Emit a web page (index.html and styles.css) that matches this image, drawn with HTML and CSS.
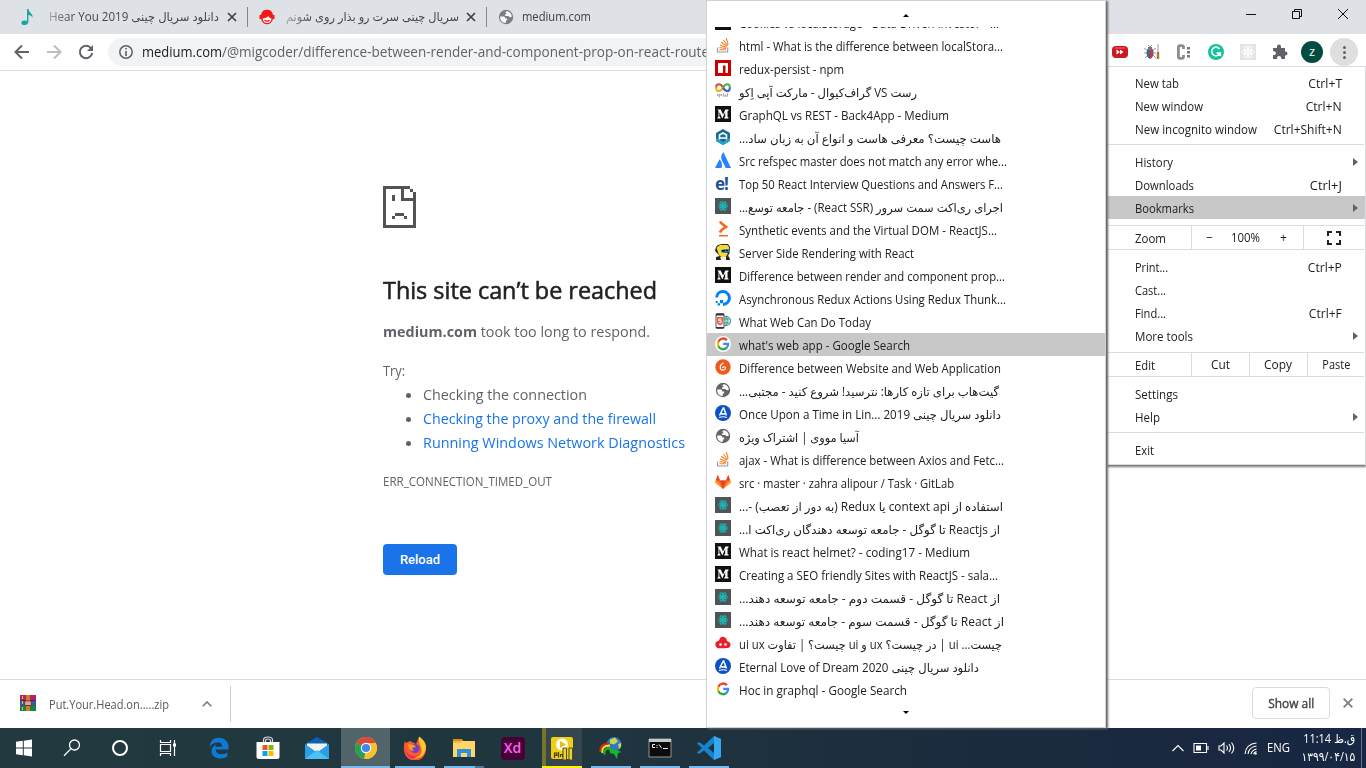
FILE: index.html
```html
<!DOCTYPE html>
<html lang="en">
<head>
<meta charset="utf-8">
<title>medium.com</title>
<link rel="stylesheet" href="styles.css">
</head>
<body>
<svg class="defs" aria-hidden="true">
  <symbol id="medium" viewBox="0 0 16 16"><path fill="#111" d="M0 0h16v16H0z"/><path fill="#fff" d="M2.500 3.500h3.200l2.400 5 2.200-5h3.200v1l-1 .7v5.700l1 .7v.9H9.200v-.9l1-.7V6l-2.600 6h-.5L4.400 6v4.600l1.200 1.300v.6H2.400v-.6l1.100-1.300V5.100z"/></symbol>
  <symbol id="stack" viewBox="0 0 16 16"><path fill="none" stroke="#999" stroke-width="1.100" d="M2.500 10.500v4.500h10.200v-4.500"/><path fill="none" stroke="#f48024" stroke-width="1.100" d="M4.300 12.800h6.600M4.300 10.500l6.700 1M4.900 8l6.500 2.400M6.200 5.300l5.700 4M8.300 3l4.300 5.500M11.200 1l2 6.600"/></symbol>
  <symbol id="npm" viewBox="0 0 16 16"><path fill="#cb0000" d="M0 0h16v16H0z"/><path fill="#fff" d="M3 3h10v10h-2.500V5.500H8V13H3z"/></symbol>
  <symbol id="infinity" viewBox="0 0 16 16"><g fill="none" stroke-width="2.100"><path stroke="#e64a2e" d="M8 4.500C6 .5.900-.2 1.200 4.700"/><path stroke="#efb61c" d="M1.200 4.500C1 9.500 6 9 8 4.500"/><path stroke="#45b549" d="M8 4.500C10 .5 15.100-.2 14.800 4.700"/><path stroke="#465ac2" d="M14.800 4.500C15 9.500 10 9 8 4.500"/></g><path stroke="#aaa" d="M2.500 11v2.300M4.500 11v3.500M6.500 11v2M8.300 10v3.500M10.300 11v2.300M12.500 10v3.300M2.500 12h4M8.300 13h4.500"/></symbol>
  <symbol id="hex" viewBox="0 0 16 16"><path fill="#176c94" d="M8 0l7 4v8l-7 4-7-4V4z"/><path fill="#29a3c3" d="M1 9l7 4 7-4v3l-7 4-7-4z"/><path fill="none" stroke="#fff" stroke-width="1.600" d="M4.500 10.500V6L8 4l3.500 2v4.500M5 9h6"/></symbol>
  <symbol id="atlassian" viewBox="0 0 16 16"><path fill="#2684ff" d="M8.300 0c-3 4-2.600 7 .3 11.500l2 4.500H16zM4.600 7.200L0 16h6.500c1.200-3 .2-6.700-1.900-8.800z"/></symbol>
  <symbol id="react" viewBox="0 0 16 16"><path fill="#4f5556" d="M0 0h16v16H0z"/><g fill="none" stroke="#1cb8b8" stroke-width="1"><ellipse cx="8" cy="8" rx="4.600" ry="1.900"/><ellipse cx="8" cy="8" rx="4.600" ry="1.900" transform="rotate(60 8 8)"/><ellipse cx="8" cy="8" rx="4.600" ry="1.900" transform="rotate(120 8 8)"/></g><circle cx="8" cy="8" r="1.500" fill="#1cb8b8"/></symbol>
  <symbol id="prompt" viewBox="0 0 16 16"><path fill="none" stroke="#f36c21" stroke-width="2.700" d="M5 .5c1.500 3 4 3.800 6 5.300C8.500 7.500 6 8.700 4.800 11.500"/><path fill="#f36c21" d="M4 14h9v1.500H4z"/></symbol>
  <symbol id="hero" viewBox="0 0 16 16"><path fill="#222" d="M3 1l4-1h6l2 3-.5 6-2 4h-7L2 9 0 7l1-4z"/><path fill="#f6d931" d="M1.500 3.500L5 1h7.500L14 3v2L7 6 6 8l7 1-2 4-4 .5L4 11 2.500 7z"/><path fill="#257fbd" d="M6 6l8-1v3l-4 1-4-1z"/><path fill="#111" d="M7 6h3v1.500H7zM11 6h2v1h-2z"/><path fill="#222" d="M1 13l4-1 1 4H1zM11 12.500h3l1 3.500h-4z"/><path fill="#eee" d="M6 14h4.500v2H6z"/></symbol>
  <symbol id="ocean" viewBox="0 0 16 16"><path fill="none" stroke="#0080ff" stroke-width="3" d="M1.700 7.500C1.800 3.600 4.600 1.600 8 1.600A6.400 6.400 0 0 1 8 14.400"/><path fill="#0080ff" d="M5 10h3.200v3.200H5zM2.600 13.200H5v2.400H2.600zM.7 11h2v2h-2z"/></symbol>
  <symbol id="webcan" viewBox="0 0 16 16"><circle cx="11" cy="8" r="4.700" fill="#e2f4f2" stroke="#26958b"/><path fill="none" stroke="#26958b" stroke-width=".8" d="M7 6h8M7 10h8M11 3v10M11 3q4 5 0 10"/><rect x="1" y=".5" width="8" height="15" rx="1" fill="#fff" stroke="#555"/><path fill="#333" d="M1 1h8v1.500H1zM1 14h8v1H1z"/><path fill="#e95b3f" d="M1.700 4h6.600l-.6 7L5 12.500 2.300 11z"/><path fill="none" stroke="#fff" d="M6.500 6H3.700v1.700h2.500l-.2 2H3.700"/></symbol>
  <symbol id="google" viewBox="0 0 16 16"><circle cx="8" cy="8" r="8" fill="#fff"/><g fill="none" stroke-width="2.300"><path stroke="#ea4335" d="M11.900 4.200A5.100 5.100 0 0 0 3.400 5.700"/><path stroke="#fbbc05" d="M3.500 5.600a5.100 5.100 0 0 0 0 4.800"/><path stroke="#34a853" d="M3.400 10.200a5.100 5.100 0 0 0 8.200 1.600"/><path stroke="#4285f4" d="M11.500 11.900a5 5 0 0 0 1.600-4H8.200"/></g></symbol>
  <symbol id="orange" viewBox="0 0 16 16"><circle cx="8" cy="8" r="7.700" fill="#f15a1d"/><path fill="none" stroke="#fff" stroke-width="1.200" d="M8.500 4C6 5 5 7 5.300 9.300c.5 2.500 4.900 2.400 5.200 0 .2-2-3-2-2.800-.3"/></symbol>
  <symbol id="globe" viewBox="0 0 16 16"><circle cx="8" cy="8" r="7.200" fill="#646669"/><path fill="#fff" d="M2.200 7.500h3.500c1 0 1.500.7 1.500 2h2v1.500c-1 0-1.500 1-1.500 2.900C4.200 14 1.800 11 2.200 7.500zM7.300 3.500C8 2.200 9 2 10 2.500c2 .7 3.500 2.500 3.900 5-1.400 1-2.900.9-3.400-.4C9 7 7.500 7.300 7 6.500c-.5-.8.5-1.300 1.500-1.300 0-.8-.5-1.200-1.200-1.700z"/></symbol>
  <symbol id="ablue" viewBox="0 0 16 16"><circle cx="8" cy="8" r="8" fill="#0c50c5"/><path fill="none" stroke="#fff" stroke-width="1.500" d="M8.500 2.500L4.500 10.500M8.500 2.500l3 8M6 8.500q2.500 1 5 0"/><path stroke="#fff" stroke-width="1.200" d="M4 12.500q4-1.500 8 0" fill="none"/></symbol>
  <symbol id="gitlab" viewBox="0 0 16 16"><path fill="#fc6d26" d="M0 8.500L2.700 1l2.300 5.500h6L13.300 1 16 8.500 8 15z"/><path fill="#e24329" d="M5 6.500h6L8 15zM2.700 1L5 6.500H1zM13.300 1L11 6.500h4z"/><path fill="#fca326" d="M0 8.500l1-2.600L8 15zM16 8.500l-1-2.600L8 15z"/></symbol>
  <symbol id="redcar" viewBox="0 0 16 16"><path fill="#e9202b" d="M1 7l3-1.500L5 3q3-3 6.500.7L12 6q4 1 3.500 4.500-1 3-3.500 2.500-5 .5-9 .2C0 12 0 8 1 7z"/><circle cx="5.500" cy="9.500" r="1.300" fill="#fff"/><circle cx="10.500" cy="9.500" r="1.300" fill="#fff"/></symbol>
  <symbol id="chev" viewBox="0 0 5 8"><path fill="#5f6368" d="M0 0l5 4-5 4z"/></symbol>
</svg>

<div class="screen">
  <header class="tabstrip">
    <div class="tab tab1"><svg class="ic" viewBox="0 0 16 16"><path fill="#18a3a4" d="M7 0h1.500c.3 4 4.500 4 4 8.500C11.300 6.500 9.500 6 8.400 6v6.700C8 15.500 5 16.500 3 16c-3-1-1.500-4.600 1.500-4.400L7 12z"/></svg><span class="fade"><span class="fit" data-w="170">Hear You 2019 دانلود سریال چینی</span></span><svg class="x" viewBox="0 0 10 10"><path d="M1 1l8 8M9 1L1 9"/></svg></div>
    <div class="tab tab2"><svg class="ic" viewBox="0 0 16 16"><path fill="#f21818" d="M2 6C3 2 5 .8 8 .8S13 2 14 6h1.500v4H14c-1 3.500-3.500 5.200-6 5.200S3 13.500 2 10H.5V6z"/><path fill="#fff" d="M3.500 9.500C6 9.500 8 8.500 9.500 7c.5 1.500 1.500 2.300 3 2.500C12 13 10 14 8 14s-4-1.300-4.500-4.500z"/><path stroke="#f21818" stroke-width="1.200" fill="none" d="M5.500 11q2.500 2.500 5 0"/></svg><span class="fade2"><span class="fit" data-w="173" dir="rtl">سریال چینی سرت رو بذار روی شونم</span></span><svg class="x" viewBox="0 0 10 10"><path d="M1 1l8 8M9 1L1 9"/></svg></div>
    <div class="tab tab3"><svg class="ic" viewBox="0 0 16 16"><use href="#globe"/></svg><span class="fit" data-w="69">medium.com</span></div>
    <div class="winbtns">
      <svg viewBox="0 0 12 12"><path d="M1 6.500h10"/></svg>
      <svg viewBox="0 0 12 12"><path d="M1.500 3.500h7v7h-7zM3.500 3.500v-2h7v7h-2"/></svg>
      <svg viewBox="0 0 12 12"><path d="M1 1l10 10M11 1L1 11"/></svg>
    </div>
  </header>

  <nav class="toolbar">
    <svg class="nav" viewBox="0 0 16 16"><path fill="none" stroke="#5f6368" stroke-width="2" d="M15 8H2M8 1.500L1.500 8 8 14.500"/></svg>
    <svg class="nav" viewBox="0 0 16 16"><path fill="none" stroke="#bcbec0" stroke-width="2" d="M1 8h13M8 1.500L14.500 8 8 14.500"/></svg>
    <svg class="nav" viewBox="0 0 16 16"><path fill="none" stroke="#5f6368" stroke-width="2" d="M13 4.200A6.200 6.200 0 1 0 14.200 9"/><path fill="#5f6368" d="M15 1v6H9z"/></svg>
    <div class="omnibox">
      <svg viewBox="0 0 14 14"><circle cx="7" cy="7" r="6.200" fill="none" stroke="#5f6368" stroke-width="1.500"/><path fill="#5f6368" d="M6.200 3h1.600v1.600H6.200zM6.200 6h1.600v5H6.200z"/></svg>
      <span class="domain"><span class="fit" data-w="80">medium.com</span></span><span class="fit path" data-w="487">/@migcoder/difference-between-render-and-component-prop-on-react-route</span>
    </div>
    <div class="exts">
      <svg viewBox="0 0 16 16"><rect y="2" width="16" height="12" rx="4" fill="#cf1722"/><path fill="#e23f48" d="M3 3h10v2H3z"/><path fill="#fff" d="M4.500 5.500L8 8l-3.500 2.500zM8 5.500L11.500 8 8 10.500z"/></svg>
      <svg viewBox="0 0 16 16"><path stroke="#999" fill="none" d="M0 4l4 3M0 9h4M1 14l3-3M12 4L8 7M12 9H8M12 14l-3-3M4 1l2 2 2-2"/><ellipse cx="6" cy="9" rx="3.500" ry="5.700" fill="#47668b"/><path fill="#c4384e" d="M6 4c4 0 4 9 0 10.700z"/><path fill="#777" d="M4 3h4v3H4z"/><path stroke="#999" d="M14 0v8"/><path stroke="#a9793c" stroke-width="2.500" d="M14 8v7"/></svg>
      <svg viewBox="0 0 16 16"><path fill="none" stroke="#8d8d8d" stroke-width="2.800" d="M7.500 5V3.500Q7.500 1.700 6 1.700H4Q2.400 1.700 2.400 3.500v9q0 1.800 1.600 1.800h2q1.500 0 1.500-1.800V11"/><path fill="#777" d="M11 3h3v2.500h-3zM11 7h3v2.500h-3zM11 11h3v2.500h-3z"/></svg>
      <svg viewBox="0 0 16 16"><circle cx="8" cy="8" r="8" fill="#15c39a"/><path fill="none" stroke="#fff" stroke-width="1.700" d="M11.500 5A4.300 4.300 0 1 0 12 9H8.500M12.300 8.500V12"/></svg>
      <svg viewBox="0 0 16 16"><path fill="#e4e4e4" d="M0 0h16v16H0z"/><g fill="none" stroke="#fff"><ellipse cx="8" cy="8" rx="6" ry="2.500"/><ellipse cx="8" cy="8" rx="6" ry="2.500" transform="rotate(60 8 8)"/><ellipse cx="8" cy="8" rx="6" ry="2.500" transform="rotate(120 8 8)"/></g><circle cx="8" cy="8" r="1.500" fill="#fff"/></svg>
      <svg viewBox="0 0 16 16"><path fill="#5f6368" d="M1 4h4V2.500a2 2 0 0 1 4 0V4h4v3.500h.5a2 2 0 0 1 0 4H13V15H9.200v-1a2 2 0 0 0-4.200 0v1H1v-4h1a1.800 1.800 0 0 0 0-3.700H1z"/></svg>
    </div>
    <div class="avatar">z</div>
    <div class="more"><i></i><i></i><i></i></div>
  </nav>

  <main class="page">
    <svg class="sad" viewBox="0 0 11 14" shape-rendering="crispEdges"><path fill="#535353" d="M0 0h9v1H1v12h9V5H6V1h1v3h3V2h1v12H0zM9 1h1v1H9zM3 3h1v2H3zM4 9h3v1H4zM3 10h1v1H3zM7 10h1v1H7z"/></svg>
    <h1><span class="fit" data-w="274">This site can’t be reached</span></h1>
    <p class="msg"><span class="fit" data-w="267"><b>medium.com</b> took too long to respond.</span></p>
    <p class="try"><span class="fit" data-w="22">Try:</span></p>
    <ul class="tips">
      <li><span class="fit" data-w="164">Checking the connection</span></li>
      <li><a class="fit" data-w="233">Checking the proxy and the firewall</a></li>
      <li><a class="fit" data-w="262">Running Windows Network Diagnostics</a></li>
    </ul>
    <p class="code"><span class="fit" data-w="169">ERR_CONNECTION_TIMED_OUT</span></p>
    <button class="reload">Reload</button>
  </main>

  <footer class="shelf">
    <svg class="rar" viewBox="0 0 16 16"><path fill="#b4235c" d="M0 0h16v5.300H0z"/><path fill="#3b54b0" d="M0 5.300h16v5.300H0z"/><path fill="#168446" d="M0 10.600h16V16H0z"/><path fill="#2a1838" d="M0 5h16v.7H0zM0 10.400h16v.7H0z"/><path fill="#d47a27" d="M6 0h4v16H6z"/><path fill="#fff" stroke="#6d3925" d="M5 6h6v4.500H5z"/><path stroke="#d93b42" d="M7 6v4M9 6v4"/><path stroke="#eec241" d="M2.500 1v3M2.500 6v3M2.500 12v3"/></svg>
    <span class="file"><span class="fit" data-w="120">Put.Your.Head.on.....zip</span></span>
    <svg class="up" viewBox="0 0 10 6"><path d="M.7 5.300L5 1l4.300 4.300"/></svg>
    <span class="vline"></span>
    <button class="showall"><span class="fit" data-w="46">Show all</span></button>
    <svg class="close" viewBox="0 0 10 10"><path d="M.7.7l8.600 8.600M9.300.7L.7 9.300"/></svg>
  </footer>

  <div class="taskbar">
    <div class="t"><svg viewBox="0 0 24 24"><path fill="#fff" d="M4 5.800l6.800-1v6.700H4zM11.800 4.700L20 3.600v7.900h-8.200zM4 12.500h6.800v6.700L4 18.200zM11.800 12.500H20v7.900l-8.200-1.100z"/></svg></div>
    <div class="t"><svg viewBox="0 0 24 24"><g fill="none" stroke="#fff" stroke-width="1.300"><circle cx="14.500" cy="9" r="5"/><path d="M11 12.600l-7 7.200"/></g></svg></div>
    <div class="t"><svg viewBox="0 0 24 24"><circle cx="12" cy="12" r="7" fill="none" stroke="#fff" stroke-width="2"/></svg></div>
    <div class="t"><svg viewBox="0 0 24 24"><path fill="none" stroke="#fff" stroke-width="1.200" d="M4.500 8.500h10v7h-10zM4.500 4v2.500h10V4M4.500 20v-2.500h10V20M18.500 4v16"/><path fill="#fff" d="M17 7.500h3v3h-3z"/></svg></div>
    <div class="t w first"><svg viewBox="0 0 24 24"><path fill="#0c7bd8" d="M2.500 11C3.500 4 7.500 1.800 12 1.800c6 0 9.500 4.500 9.500 8.700v3H8.500c.3 3.500 3 4.700 6 4.700 2.500 0 4.200-.6 5.800-1.600v4C18.500 21.800 16 22.500 13.300 22.500 7.500 22.500 4.500 18.800 4.500 15.500c0-3.500 2-5.800 4.700-7.300-.7 1-1 1.800-1 2.500h7c0-3-1.500-4.300-4.200-4.300-4 0-7 2-8.500 4.600z"/></svg></div>
    <div class="t w"><svg viewBox="0 0 24 24"><path fill="none" stroke="#ddd" stroke-width="1.200" d="M7.500 7V4q0-3 4.500-3t4.500 3v3M9.500 7V5q0-2 2.500-2t2.500 2v2"/><path fill="#fff" d="M.5 6h23v15q0 2-2 2h-19q-2 0-2-2z"/><path fill="#f25022" d="M6.500 9h5v5h-5z"/><path fill="#7fba00" d="M12.500 9h5v5h-5z"/><path fill="#00a4ef" d="M6.500 15h5v5h-5z"/><path fill="#ffb900" d="M12.500 15h5v5h-5z"/></svg></div>
    <div class="t w"><svg viewBox="0 0 24 24"><path fill="#0a63b6" d="M0 8l12-7 12 7v3H0z"/><path fill="#f4f4f4" d="M2 7.500h20V15H2z"/><path fill="#2d9fe4" d="M0 8l12 8.500L24 8v15H0z"/><path fill="#48c3f3" d="M0 23l12-9 12 9z"/></svg></div>
    <div class="t w on active"><svg viewBox="0 0 24 24"><circle cx="12" cy="12" r="11" fill="#fbc12d"/><path fill="#e0473b" d="M12 12L2.500 6.500a11 11 0 0 1 19 0z"/><path fill="#29a153" d="M12 12l-2 11A11 11 0 0 1 2.500 6.500z"/><path fill="#fbc12d" d="M12 7h9.800a11 11 0 0 1-10.300 16L16 14z"/><circle cx="12" cy="12" r="5.200" fill="#fff"/><circle cx="12" cy="12" r="4.100" fill="#4285f4"/></svg></div>
    <div class="t w on"><svg viewBox="0 0 24 24"><path fill="#ff5a2a" d="M2 5l1 2 4-2 6 3 3-7q7 4 7 12a11 11 0 0 1-22 1Q.5 9 2 5z"/><path fill="#ffc62e" d="M16 .5c6 4 8 9 6.500 13.500C21 20 16 23 11 22c7-1 9-6 7-11-.5-2-3-4-2-10.500z"/><path fill="#e62672" d="M2 11c1 8 7 10 12 9-4 5-12 1-12-9z"/><circle cx="12" cy="12.500" r="4.600" fill="#7141c5"/><path fill="#ff9c28" d="M5 8l6 1 2 2-4 1 2 3q-6 0-6-7z"/></svg></div>
    <div class="t w on fold"><svg viewBox="0 0 24 24"><path fill="#d7920b" d="M1 3h9l2 3H1z"/><path fill="#ffd667" d="M1 5h22v16H1z"/><path fill="#f1bb42" d="M1 5h9l-2 2H1z"/><path fill="#2e91dc" d="M5 13h14v8h-4v-4H9v4H5z"/></svg></div>
    <div class="t w"><div class="xd">Xd</div></div>
    <div class="t w on play"><svg viewBox="0 0 24 24"><rect x="1" y="1" width="22" height="22" rx="2" fill="#f1cf17"/><circle cx="12" cy="8.500" r="6" fill="#fff"/><path fill="#e9bd00" d="M10 5l6 3.500-6 3.500z"/><path stroke="#4c4000" stroke-width="1.200" fill="none" d="M4.500 22v-5h2.300v2.300H4.500M8.500 16v5.500M10.500 21v-2.500h2V21"/><path fill="#e7d63b" stroke="#544c09" d="M13 12h3.500v12H13zM19 12h3.500v12H19z"/></svg></div>
    <div class="t w on"><svg viewBox="0 0 24 24"><circle cx="15" cy="8.500" r="7.500" fill="#3474c4"/><path fill="#c8d64b" d="M11 3.500l5-2 3 4-4 3-4-1zM19 8l3-1v4l-2 2z"/><path fill="none" stroke="#d22121" stroke-width="2" d="M1.500 16Q0 8 10 7.500"/><path fill="none" stroke="#f4e21c" stroke-width="2" d="M3.500 17Q2 9.500 11 9.500"/><path fill="none" stroke="#25a52a" stroke-width="2.500" d="M5.500 18.500Q4 12 12 12"/><path fill="#16b72a" d="M10 12l13 4-4 1-1 6-3-5-4-1z"/></svg></div>
    <div class="t w on"><svg viewBox="0 0 24 24"><path fill="#0b0b0b" stroke="#969696" d="M1 3h22v18H1z"/><path fill="#c5c9cb" d="M1 3h22v3H1z"/><path fill="none" stroke="#eee" d="M7 8.500H4.500v3H7M9 9v1M9 11v1M11 8.500l2.500 3.500M15 12.500h5"/></svg></div>
    <div class="t w on"><svg viewBox="0 0 24 24"><path fill="#1684d1" d="M17 0l7 3v18l-7 3L7 14.500 2 18l-2-1.500L5 12 0 7.500 2 6l5 3.500zM17 7l-6 5 6 5z"/><path fill="#35a8ef" d="M17 0l7 3v18l-7 3z"/></svg></div>
    <div class="tray">
      <svg width="12" height="8" viewBox="0 0 12 8"><path d="M.5 7L6 1.500 11.500 7"/></svg>
      <svg width="16" height="10" viewBox="0 0 16 10"><path d="M1 .5h12.500v9H1zM15 3v4"/><path fill="#fff" stroke="none" d="M3 2.500h5v5H3z"/></svg>
      <svg width="17" height="14" viewBox="0 0 17 14"><path d="M1 5h2l3-3v10L3 9H1zM8.500 4.500q2 2.500 0 5M11 3q3 4 0 8M13.500 1.500q4.500 5.500 0 11"/></svg>
      <svg width="14" height="13" viewBox="0 0 14 13"><path d="M1 12Q2 2 12.500 1M4 12Q5 5 12.500 4M7 12q1-4 5.500-5M9.500 12q1-2 3-2.500"/><circle cx="11.500" cy="11.500" r="1.200" fill="#fff" stroke="none"/></svg>
      <span class="eng"><span class="fit" data-w="23">ENG</span></span>
      <div class="clock"><span class="fit end" data-w="52" dir="rtl">ق.ظ 11:14</span><span class="fit end" data-w="54" dir="ltr" lang="fa">۱۳۹۹/۰۴/۱۵</span></div>
    </div>
    <span class="peek"></span>
  </div>
</div>

<aside class="menu">
  <div class="mi"><span class="fit" data-w="44">New tab</span><span class="fit end" data-w="34">Ctrl+T</span></div>
  <div class="mi"><span class="fit" data-w="68">New window</span><span class="fit end" data-w="36">Ctrl+N</span></div>
  <div class="mi"><span class="fit" data-w="122">New incognito window</span><span class="fit end" data-w="68">Ctrl+Shift+N</span></div>
  <hr>
  <div class="mi"><span class="fit" data-w="38">History</span><svg><use href="#chev"/></svg></div>
  <div class="mi"><span class="fit" data-w="59">Downloads</span><span class="fit end" data-w="32">Ctrl+J</span></div>
  <div class="mi sel"><span class="fit" data-w="59">Bookmarks</span><svg><use href="#chev"/></svg></div>
  <div class="cells zoom"><div class="lab"><span class="fit" data-w="31">Zoom</span></div><div class="z"><span>−</span><span class="fit" data-w="29">100%</span><span>+</span></div><div class="fs"><svg viewBox="0 0 14 14"><path fill="none" stroke="#202124" stroke-width="2" d="M1 5V1h4M9 1h4v4M13 9v4H9M5 13H1V9"/></svg></div></div>
  <div class="mi"><span class="fit" data-w="33">Print...</span><span class="fit end" data-w="34">Ctrl+P</span></div>
  <div class="mi"><span class="fit" data-w="31">Cast...</span></div>
  <div class="mi"><span class="fit" data-w="31">Find...</span><span class="fit end" data-w="33">Ctrl+F</span></div>
  <div class="mi"><span class="fit" data-w="58">More tools</span><svg><use href="#chev"/></svg></div>
  <div class="cells edit"><div class="lab"><span class="fit" data-w="20">Edit</span></div><div><span class="fit mid" data-w="19">Cut</span></div><div><span class="fit mid" data-w="28">Copy</span></div><div><span class="fit mid" data-w="28">Paste</span></div></div>
  <div class="mi"><span class="fit" data-w="43">Settings</span></div>
  <div class="mi"><span class="fit" data-w="25">Help</span><svg><use href="#chev"/></svg></div>
  <hr class="last">
  <div class="mi"><span class="fit" data-w="19">Exit</span></div>
</aside>

<aside class="bookmarks">
  <div class="arrow"><i class="aup"></i></div>
  <div class="list">
    <div class="bm"><svg><use href="#medium"/></svg><span class="fit" data-w="260">Cookies vs localStorage - Data Driven Investor - ...</span></div>
    <div class="bm"><svg><use href="#stack"/></svg><span class="fit" data-w="264">html - What is the difference between localStora...</span></div>
    <div class="bm"><svg><use href="#npm"/></svg><span class="fit" data-w="105">redux-persist - npm</span></div>
    <div class="bm"><svg><use href="#infinity"/></svg><span class="fit" dir="rtl" data-w="178">رست VS گراف‌کیوال - مارکت آپی اِکو</span></div>
    <div class="bm"><svg><use href="#medium"/></svg><span class="fit" data-w="210">GraphQL vs REST - Back4App - Medium</span></div>
    <div class="bm"><svg><use href="#hex"/></svg><span class="fit" dir="rtl" data-w="262">هاست چیست؟ معرفی هاست و انواع آن به زبان ساد...</span></div>
    <div class="bm"><svg><use href="#atlassian"/></svg><span class="fit" data-w="268">Src refspec master does not match any error whe...</span></div>
    <div class="bm"><span class="eicon">e!</span><span class="fit" data-w="264">Top 50 React Interview Questions and Answers F...</span></div>
    <div class="bm"><svg><use href="#react"/></svg><span class="fit" dir="rtl" data-w="264">اجرای ری‌اکت سمت سرور (React SSR) - جامعه توسع...</span></div>
    <div class="bm"><svg><use href="#prompt"/></svg><span class="fit" data-w="258">Synthetic events and the Virtual DOM - ReactJS...</span></div>
    <div class="bm"><svg><use href="#hero"/></svg><span class="fit" data-w="175">Server Side Rendering with React</span></div>
    <div class="bm"><svg><use href="#medium"/></svg><span class="fit" data-w="266">Difference between render and component prop...</span></div>
    <div class="bm"><svg><use href="#ocean"/></svg><span class="fit" data-w="267">Asynchronous Redux Actions Using Redux Thunk...</span></div>
    <div class="bm"><svg><use href="#webcan"/></svg><span class="fit" data-w="132">What Web Can Do Today</span></div>
    <div class="bm sel"><svg><use href="#google"/></svg><span class="fit" data-w="171">what's web app - Google Search</span></div>
    <div class="bm"><svg><use href="#orange"/></svg><span class="fit" data-w="262">Difference between Website and Web Application</span></div>
    <div class="bm"><svg><use href="#globe"/></svg><span class="fit" dir="rtl" data-w="260">گیت‌هاب برای تازه کارها: نترسید! شروع کنید - مجتبی...</span></div>
    <div class="bm"><svg><use href="#ablue"/></svg><span class="fit" data-w="262">Once Upon a Time in Lin... 2019 دانلود سریال چینی</span></div>
    <div class="bm"><svg><use href="#globe"/></svg><span class="fit" dir="rtl" data-w="120">آسیا مووی | اشتراک ویژه</span></div>
    <div class="bm"><svg><use href="#stack"/></svg><span class="fit" data-w="265">ajax - What is difference between Axios and Fetc...</span></div>
    <div class="bm"><svg><use href="#gitlab"/></svg><span class="fit" data-w="215">src · master · zahra alipour / Task · GitLab</span></div>
    <div class="bm"><svg><use href="#react"/></svg><span class="fit" dir="rtl" data-w="264">استفاده از context api یا Redux (به دور از تعصب) -...</span></div>
    <div class="bm"><svg><use href="#react"/></svg><span class="fit" dir="rtl" data-w="261">از Reactjs تا گوگل - جامعه توسعه دهندگان ری‌اکت ا...</span></div>
    <div class="bm"><svg><use href="#medium"/></svg><span class="fit" data-w="231">What is react helmet? - coding17 - Medium</span></div>
    <div class="bm"><svg><use href="#medium"/></svg><span class="fit" data-w="259">Creating a SEO friendly Sites with ReactJS - sala...</span></div>
    <div class="bm"><svg><use href="#react"/></svg><span class="fit" dir="rtl" data-w="261">از React تا گوگل - قسمت دوم - جامعه توسعه دهند...</span></div>
    <div class="bm"><svg><use href="#react"/></svg><span class="fit" dir="rtl" data-w="265">از React تا گوگل - قسمت سوم - جامعه توسعه دهند...</span></div>
    <div class="bm"><svg><use href="#redcar"/></svg><span class="fit" dir="rtl" data-w="263">چیست... ui | در چیست؟ ux و ui چیست؟ | تفاوت ui ux</span></div>
    <div class="bm"><svg><use href="#ablue"/></svg><span class="fit" data-w="240">Eternal Love of Dream 2020 دانلود سریال چینی</span></div>
    <div class="bm"><svg><use href="#google"/></svg><span class="fit" data-w="168">Hoc in graphql - Google Search</span></div>
  </div>
  <div class="arrow"><i class="adown"></i></div>
</aside>
<script src="fit.js"></script>
</body>
</html>
```

FILE: styles.css
```css
* { box-sizing: border-box; }
body { margin: 0; width: 1366px; height: 768px; overflow: hidden; background: #fff; color: #202124; font: 12px/16px "Open Sans", "DejaVu Sans", sans-serif; }
.defs { display: none; }
svg { display: block; flex: none; }
.fit { display: inline-block; flex: none; white-space: nowrap; transform-origin: left center; }
.fit.end { transform-origin: right center; }
.fit.mid { transform-origin: center; }
.screen { display: flex; flex-direction: column; height: 768px; }

.tabstrip { height: 34px; flex: none; background: #dee1e6; display: flex; color: #45484c; }
.tab { display: flex; align-items: center; height: 20px; margin-top: 7px; }
.tab .ic { width: 16px; height: 16px; }
.tab .x { width: 10px; height: 10px; margin-right: 10px; }
.x path { stroke: #3c4043; stroke-width: 1.7; }
.tab1, .tab2 { border-right: 1px solid #85888c; }
.tab1 { width: 248px; padding-left: 20px; }
.tab1 .fade { width: 178px; margin-left: 13px; margin-right: auto; mask-image: linear-gradient(90deg, #0006, #000 22px); }
.tab2 { width: 239px; padding-left: 11px; }
.tab2 .fade2 { width: 180px; margin-left: 11px; margin-right: auto; mask-image: linear-gradient(90deg, #0005, #000 26px); }
.tab3 { padding-left: 11px; gap: 8px; color: #3c4043; }
.tab3 .ic { opacity: .8; }
.winbtns { margin-left: auto; display: flex; gap: 34px; padding: 8px 17px 0 0; }
.winbtns svg { width: 12px; height: 12px; fill: none; stroke: #111; stroke-width: 1; }

.toolbar { height: 37px; flex: none; display: flex; align-items: center; border-bottom: 1px solid #dadce0; padding: 0 8px 0 14px; }
.nav { width: 16px; height: 16px; margin-right: 16px; }
.omnibox { flex: 1; min-width: 0; height: 28px; margin-left: -2px; border-radius: 14px; background: #f1f3f4; display: flex; align-items: center; padding-left: 11px; font-size: 14px; }
.omnibox svg { width: 14px; height: 14px; margin-right: 9px; }
.domain { width: 80px; flex: none; white-space: nowrap; }
.path { color: #5f6368; }
.exts { display: flex; gap: 16px; padding-left: 6px; }
.exts svg { width: 16px; height: 16px; }
.avatar { width: 22px; height: 22px; margin-left: 13px; border-radius: 50%; background: #004d40; color: #fff; font: 13px/20px "Open Sans", sans-serif; text-align: center; flex: none; }
.more { width: 28px; height: 28px; margin-left: 7px; border-radius: 50%; background: #dfdfdf; display: flex; flex-direction: column; align-items: center; justify-content: center; gap: 2px; flex: none; }
.more i { width: 3px; height: 3px; border-radius: 50%; background: #5f6368; }

.page { flex: 1; min-height: 0; padding: 115px 0 0 383px; color: #5f6368; font-size: 15px; line-height: 24px; }
.sad { width: 33px; height: 42px; }
h1 { margin: 47px 0 0; font-size: 24px; line-height: 30px; font-weight: 400; color: #202124; -webkit-text-stroke: .55px #202124; }
.msg { margin: 14px 0 0; }
.try { margin: 15px 0 0; }
.tips { margin: 0; padding-left: 40px; }
.tips a { color: #1a73e8; }
.code { margin: 16px 0 0; font-size: 12px; }
.reload { display: block; margin-top: 50px; width: 74px; height: 31px; padding: 0; border: 0; border-radius: 4px; background: #1a73e8; color: #fff; font: 500 13px "Roboto", sans-serif; }

.shelf { height: 49px; flex: none; border-top: 1px solid #dadce0; display: flex; align-items: center; padding: 0 13px 0 20px; }
.rar { width: 16px; height: 16px; margin-top: -3px; }
.file { width: 120px; margin-left: 13px; color: #55585c; white-space: nowrap; padding-top: 2px; }
.up { width: 10px; height: 6px; margin-left: 33px; fill: none; stroke: #777a7e; stroke-width: 1.6; }
.vline { width: 1px; height: 36px; margin-left: 18px; background: #c9cbcd; }
.showall { margin-left: auto; width: 78px; height: 32px; padding: 0; margin-top: -2px; border: 1px solid #dadce0; border-radius: 4px; background: #fff; color: #3c4043; font: 12px "Open Sans", sans-serif; -webkit-text-stroke: .35px #3c4043; }
.showall .fit { transform-origin: center; margin-top: -2px; }
.close { width: 10px; height: 10px; margin: -2px 0 0 13px; stroke: #7b7e82; stroke-width: 1.8; }

.taskbar { height: 40px; flex: none; display: flex; background: linear-gradient(90deg, #22393f, #20363f 42%, #1b2a3e 75%, #182742); color: #fff; padding-right: 4px; }
.t { width: 48px; height: 40px; display: flex; align-items: center; justify-content: center; position: relative; flex: none; }
.t svg { width: 24px; height: 24px; }
.t.w { width: 49px; }
.t.first { margin-left: 2px; }
.on::after { content: ""; position: absolute; left: 5px; right: 4px; bottom: 0; height: 2px; background: #76b9ed; }
.active { background: #516469; }
.active::after { left: 0; right: 0; }
.fold::after { background: linear-gradient(90deg, #76b9ed 31px, #48799c 31px); }
.play { background: linear-gradient(90deg, transparent 5px, #75742c 5px, #75742c 9px, #36464f 9px, #36464f 45px, transparent 45px); }
.play::after { background: #fff200; }
.xd { width: 24px; height: 23px; border-radius: 4px; background: #470137; color: #ff61f6; font: 600 14px/21px "Open Sans", sans-serif; text-align: center; }
.tray { margin-left: auto; display: flex; align-items: center; padding-right: 6px; }
.tray svg { fill: none; stroke: #fff; stroke-width: 1.1; margin-right: 9px; }
.eng { width: 23px; margin-right: 11px; white-space: nowrap; }
.clock { width: 54px; display: flex; flex-direction: column; align-items: flex-end; line-height: 18px; }
.peek { width: 1px; background: #63718a; }

.menu { position: absolute; left: 1107px; top: 66px; width: 259px; height: 399px; border: 1px solid #dadce0; background: #fff; padding-top: 4px; box-shadow: 0 2px 2px #777; }
.mi { height: 23px; display: flex; align-items: center; justify-content: space-between; padding: 0 23px 0 27px; }
.mi .fit { padding-top: 2px; }
.mi svg { width: 5px; height: 8px; margin-right: -16px; }
.mi.sel, .bm.sel { background: #c8c8c8; }
.menu hr { height: 1px; margin: 4px 1px 5px 0; border: 0; background: #dadce0; }
.cells { height: 25px; margin: 5px 1px 5px 0; border: solid #dadce0; border-width: 1px 0; display: grid; }
.cells > div { display: flex; align-items: center; justify-content: center; border-left: 1px solid #dadce0; }
.cells > .lab { justify-content: flex-start; border: 0; padding: 2px 0 0 27px; }
.cells.zoom { grid-template-columns: 83px 112px 1fr; margin-top: 6px; }
.cells.edit { grid-template-columns: 83px 58px 58px 1fr; }
.cells > .z { justify-content: space-between; padding: 0 16px 0 14px; }
.fs svg { width: 14px; height: 14px; }

.bookmarks { position: absolute; left: 706px; top: 0; width: 400px; height: 728px; background: #fff; border: 1px solid #d0d2d6; box-shadow: 2px 1px 2px #666; display: flex; flex-direction: column; }
.arrow { height: 26px; flex: none; display: flex; align-items: center; justify-content: center; padding-top: 3px; }
.arrow i { border: 3px solid transparent; }
.arrow .aup { border-top: 0; border-bottom-color: #000; }
.arrow .adown { border-bottom: 0; border-top-color: #000; margin-top: -6px; }
.list { height: 674px; flex: none; overflow: hidden; display: flex; flex-direction: column; justify-content: flex-end; }
.bm { height: 23px; flex: none; display: flex; align-items: center; gap: 8px; padding-left: 8px; }
.bm svg { width: 16px; height: 16px; margin-top: -1px; }
.bm .fit { padding-top: 3px; }
.eicon { width: 16px; font: 700 17px/16px "Open Sans", sans-serif; color: #205493; letter-spacing: -1px; }
```

FILE: fit.js
```js
// Narrow or widen each label to its column width.
document.querySelectorAll('.fit').forEach(function (el) {
  var w = el.getBoundingClientRect().width;
  if (w) el.style.transform = 'scaleX(' + (el.dataset.w / w).toFixed(4) + ')';
});
```
